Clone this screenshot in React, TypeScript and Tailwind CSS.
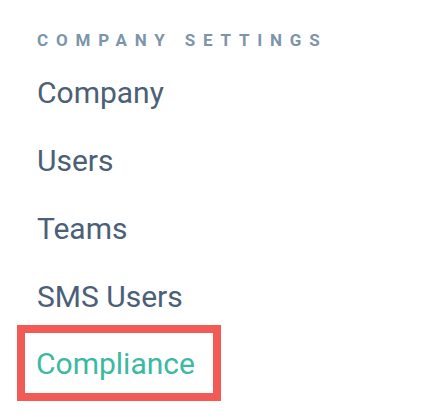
export default function App() {
  const items = ['Company', 'Users', 'Teams', 'SMS Users']

  return (
    <div className="w-[442px] h-[418px] bg-white pt-[28px] pl-[37px] font-['Roboto',sans-serif]">
      <h2 className="text-[17px] leading-6 font-bold tracking-[7.8px] text-[#7d95aa] uppercase">
        Company Settings
      </h2>
      <nav className="mt-[7px] flex flex-col">
        {items.map((item) => (
          <a key={item} className="py-4 text-[30px] leading-9 text-[#4b6077]">
            {item}
          </a>
        ))}
        <a className="-ml-[20px] mt-[-6px] w-[204px] border-8 border-[#f25a56] pl-[11px] pt-[13px] pb-[11px] text-[30px] leading-9 text-[#3cb9a3]">
          Compliance
        </a>
      </nav>
    </div>
  )
}
